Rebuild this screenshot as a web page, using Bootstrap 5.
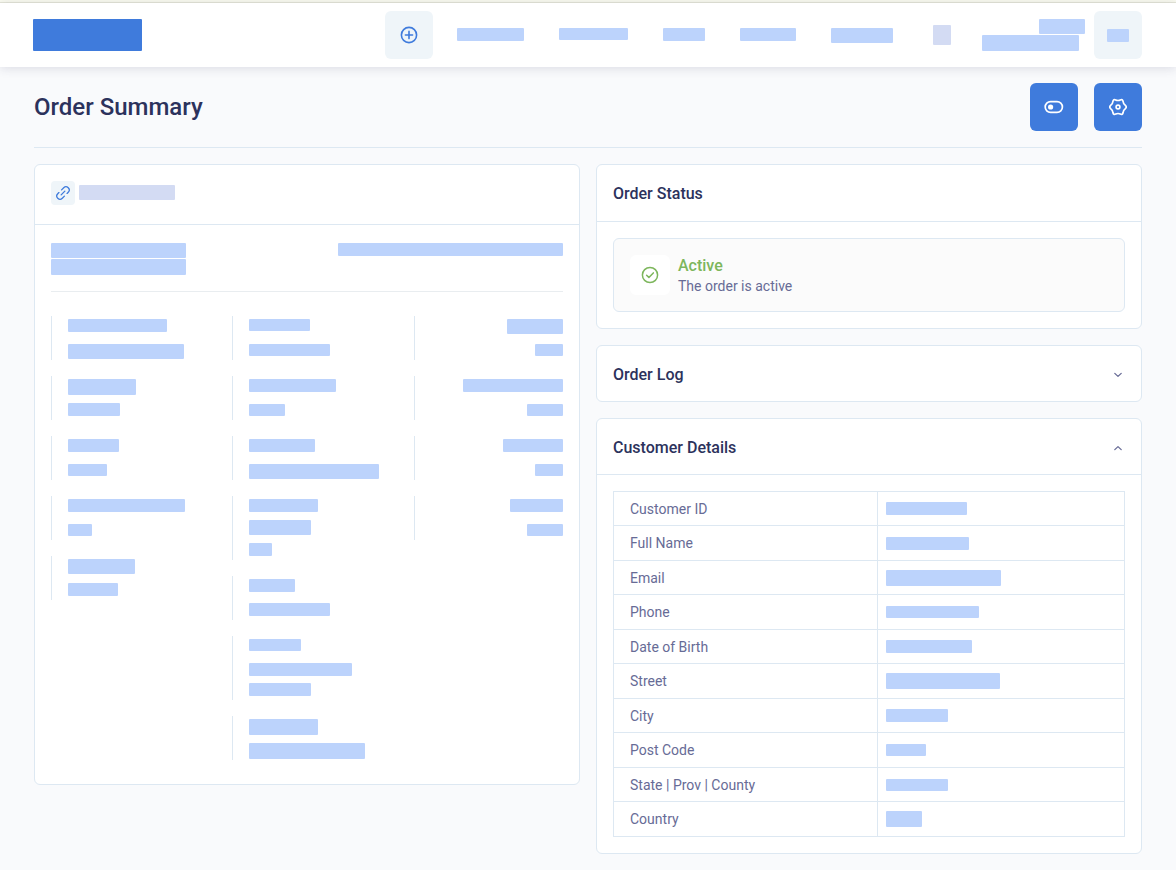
<!DOCTYPE html>
<html lang="en">
<head>
<meta charset="utf-8">
<meta name="viewport" content="width=device-width, initial-scale=1">
<title>Order Summary</title>
<link href="https://cdn.jsdelivr.net/npm/bootstrap@5.3.0/dist/css/bootstrap.min.css" rel="stylesheet">
<style>
  :root {
    --brand: #3f7bdc;
    --ink: #2c325c;
    --muted: #676b96;
    --line: #dde8f2;
    --soft: #eff5f9;
    --redact: #bcd3fc;
    --redact-alt: #d3dbf3;
    --ok: #7db65c;
  }
  body { font-family: Roboto, "Liberation Sans", sans-serif; font-size: 14px; line-height: 20px; color: var(--muted); background: #f9fafc; }
  svg { display: block; fill: none; stroke: currentColor; stroke-linecap: round; stroke-linejoin: round; }

  .notice-strip { height: 3px; background: #fafbf0; border-bottom: 1px solid #e5e6d8; }
  .topbar { height: 64px; padding: 0 34px 0 33px; background: #fff; box-shadow: 0 1px 10px rgba(50, 50, 93, .16); }
  .brand-mark { width: 109px; height: 32px; border-radius: 1px; background: var(--brand); }
  .tile { width: 48px; height: 48px; padding: 0; border: 0; border-radius: 6px; display: flex; align-items: center; justify-content: center; }
  .tile-soft, .tile-soft:hover { background: var(--soft); color: var(--brand); }
  .tile-brand, .tile-brand:hover { background: var(--brand); color: #fff; }
  .main-links { gap: 35px; margin-left: 24px; margin-right: 40px; height: 15px; }
  .main-links a { display: block; }
  .user-info { gap: 1px; margin-left: 31px; margin-right: 9px; }
  .user-info .second { margin-right: 6px; }

  /* Hidden values are drawn as plain blocks */
  .blk { display: block; height: 13px; max-width: 100%; border-radius: 1px; background: var(--redact); }
  .blk-sm { height: 12px; }
  .blk-md { height: 15px; }
  .blk-lg { height: 16px; }
  .blk-xl { height: 20px; }
  .blk-alt { background: var(--redact-alt); }

  .page { padding: 16px 34px; }
  .page-head { padding-bottom: 16px; margin-bottom: 16px; border-bottom: 1px solid var(--line); }
  .page-head h1 { font-size: 24px; line-height: 32px; font-weight: 500; color: var(--ink); }
  .panel { background: #fff; border: 1px solid var(--line); border-radius: 6px; }
  .panel-title { font-size: 16px; line-height: 24px; font-weight: 500; color: var(--ink); }
  .panel-head { height: 57px; padding: 2px 16px 0; border-bottom: 1px solid var(--line); display: flex; align-items: center; }
  .toggle-head { width: 100%; height: 55px; padding: 2px 18px 0 16px; border: 0; background: none; display: flex; align-items: center; justify-content: space-between; text-align: left; }
  .toggle-head svg { color: var(--muted); }
  .toggle-head[aria-expanded="true"] svg { transform: rotate(180deg); }

  .ref-head { height: 60px; padding: 16px; border-bottom: 1px solid var(--line); gap: 4px; }
  .ref-btn { width: 24px; height: 24px; padding: 0; border: 0; border-radius: 4px; display: flex; align-items: center; justify-content: center; }
  .ref-head .blk { margin-top: 4px; }
  .ref-body { padding: 18px 16px 24px; }
  .ref-top { padding-bottom: 16px; border-bottom: 1px solid #e9edf0; margin-bottom: 24px; }
  .ref-top .left-pair { gap: 1px; }

  .facts { display: grid; grid-template-columns: repeat(3, 1fr); column-gap: 32px; }
  .facts-col { display: flex; flex-direction: column; gap: 16px; }
  .fact { border-left: 1px solid var(--line); padding: 3px 0 0 16px; margin: 0; }
  .fact dt { height: 24px; }
  .fact dd { height: 20px; margin: 0; }
  .fact dd:last-child { height: 17px; }
  .fact dd .blk-sm, .fact dd .blk-md { position: static; margin-top: 1px; }
  .fact-tight dt { height: 20px; }
  .fact-tight dt + dd { height: 24px; }
  .facts-end dt, .facts-end dd { display: flex; justify-content: flex-end; }
  /* keep the first block's margin inside its row */
  .fact dd { display: flow-root; }
  .facts-end .fact dd { display: flex; }

  .status-box { padding: 16px; gap: 8px; background: #fbfbfb; border: 1px solid var(--line); border-radius: 6px; }
  .status-icon { width: 40px; height: 40px; border-radius: 6px; background: #fff; color: var(--ok); display: flex; align-items: center; justify-content: center; }
  .status-name { font-size: 16px; line-height: 22px; font-weight: 500; color: var(--ok); }
  .status-note { line-height: 18px; }

  .details { width: 100%; border-collapse: collapse; table-layout: fixed; }
  .details th, .details td { height: 34px; padding: 0 8px; border: 1px solid var(--line); vertical-align: middle; }
  .details tr:nth-child(even) > * { height: 35px; }
  .details th { width: 51.6%; padding-left: 16px; font-weight: 400; }
</style>
</head>
<body>
<div class="notice-strip"></div>
<header class="topbar d-flex align-items-center">
  <a href="#" class="brand-mark" aria-label="Home"></a>
  <button type="button" class="btn tile tile-soft ms-auto" aria-label="Add">
    <svg width="18" height="18" viewBox="0 0 18 18" stroke-width="1.6"><circle cx="9" cy="9" r="7.6"/><path d="M9 5.4v7.2M5.4 9h7.2"/></svg>
  </button>
  <nav class="main-links d-flex align-items-start" aria-label="Main">
    <a href="#" aria-label="Link 1"><span class="blk" style="width:67px"></span></a>
    <a href="#" aria-label="Link 2"><span class="blk blk-sm" style="width:69px"></span></a>
    <a href="#" aria-label="Link 3"><span class="blk" style="width:42px"></span></a>
    <a href="#" aria-label="Link 4"><span class="blk" style="width:56px"></span></a>
    <a href="#" aria-label="Link 5"><span class="blk blk-md" style="width:62px"></span></a>
  </nav>
  <span class="blk blk-xl blk-alt" style="width:18px"></span>
  <div class="user-info d-flex flex-column align-items-end">
    <span class="blk blk-md" style="width:46px"></span>
    <span class="blk blk-lg second" style="width:97px"></span>
  </div>
  <button type="button" class="btn tile tile-soft" aria-label="Account"><span class="blk" style="width:22px"></span></button>
</header>

<main class="page">
  <div class="page-head d-flex align-items-center gap-3">
    <h1 class="m-0 me-auto">Order Summary</h1>
    <button type="button" class="btn tile tile-brand" aria-label="Toggle view">
      <svg width="20" height="14" viewBox="0 0 20 14" stroke-width="1.7"><rect x="1.2" y="1.6" width="17.2" height="10.8" rx="5.4"/><circle cx="6.6" cy="7" r="2.6" fill="currentColor" stroke="none"/></svg>
    </button>
    <button type="button" class="btn tile tile-brand" aria-label="Settings">
      <svg width="18" height="18" viewBox="-9 -9 18 18" stroke-width="1.7"><path d="M7.3 1.7Q5.3 3 5.1 5.5Q4.6 8.3 2.3 7.1Q0 5.9-2.3 7.1Q-4.6 8.3-5.1 5.5Q-5.3 3-7.3 1.7Q-9.2 0-7.3-1.7Q-5.3-3-5.1-5.5Q-4.6-8.3-2.3-7.1Q0-5.9 2.3-7.1Q4.6-8.3 5.1-5.5Q5.3-3 7.3-1.7Q9.2 0 7.3 1.7Z"/><circle r="1.9"/></svg>
    </button>
  </div>

  <div class="row gx-3 align-items-start">
    <div class="col-6">
      <section class="panel">
        <div class="ref-head d-flex align-items-start">
          <button type="button" class="btn ref-btn tile-soft" aria-label="Copy link">
            <svg width="16" height="16" viewBox="-8 -8 16 16" stroke-width="1.3"><g transform="rotate(-45)"><path d="M1.2-3.2H4.2a3.2 3.2 0 0 1 0 6.4H2.6M-1.2 3.2H-4.2a3.2 3.2 0 0 1 0-6.4H-2.6M-2.6 0H2.6"/></g></svg>
          </button>
          <span class="blk blk-md blk-alt" style="width:96px"></span>
        </div>
        <div class="ref-body">
          <div class="ref-top d-flex justify-content-between align-items-start">
            <div class="left-pair d-flex flex-column">
              <span class="blk blk-md" style="width:135px"></span>
              <span class="blk blk-lg" style="width:135px"></span>
            </div>
            <span class="blk" style="width:225px"></span>
          </div>
          <div class="facts">
            <div class="facts-col">
              <dl class="fact"><dt><span class="blk" style="width:99px"></span></dt><dd><span class="blk blk-md" style="width:116px"></span></dd></dl>
              <dl class="fact"><dt><span class="blk blk-lg" style="width:68px"></span></dt><dd><span class="blk" style="width:52px"></span></dd></dl>
              <dl class="fact"><dt><span class="blk" style="width:51px"></span></dt><dd><span class="blk blk-sm" style="width:39px"></span></dd></dl>
              <dl class="fact"><dt><span class="blk" style="width:117px"></span></dt><dd><span class="blk blk-sm" style="width:24px"></span></dd></dl>
              <dl class="fact"><dt><span class="blk blk-md" style="width:67px"></span></dt><dd><span class="blk" style="width:50px"></span></dd></dl>
            </div>
            <div class="facts-col">
              <dl class="fact"><dt><span class="blk blk-sm" style="width:61px"></span></dt><dd><span class="blk blk-sm" style="width:81px"></span></dd></dl>
              <dl class="fact"><dt><span class="blk" style="width:87px"></span></dt><dd><span class="blk blk-sm" style="width:36px"></span></dd></dl>
              <dl class="fact"><dt><span class="blk" style="width:66px"></span></dt><dd><span class="blk blk-md" style="width:130px"></span></dd></dl>
              <dl class="fact fact-tight"><dt><span class="blk" style="width:69px"></span></dt><dd><span class="blk blk-md" style="width:62px"></span></dd><dd><span class="blk" style="width:23px"></span></dd></dl>
              <dl class="fact"><dt><span class="blk" style="width:46px"></span></dt><dd><span class="blk" style="width:81px"></span></dd></dl>
              <dl class="fact"><dt><span class="blk blk-sm" style="width:52px"></span></dt><dd><span class="blk" style="width:103px"></span></dd><dd><span class="blk" style="width:62px"></span></dd></dl>
              <dl class="fact"><dt><span class="blk blk-lg" style="width:69px"></span></dt><dd><span class="blk blk-lg" style="width:116px"></span></dd></dl>
            </div>
            <div class="facts-col facts-end">
              <dl class="fact"><dt><span class="blk blk-md" style="width:56px"></span></dt><dd><span class="blk blk-sm" style="width:28px"></span></dd></dl>
              <dl class="fact"><dt><span class="blk" style="width:100px"></span></dt><dd><span class="blk blk-sm" style="width:36px"></span></dd></dl>
              <dl class="fact"><dt><span class="blk" style="width:60px"></span></dt><dd><span class="blk blk-sm" style="width:28px"></span></dd></dl>
              <dl class="fact"><dt><span class="blk" style="width:53px"></span></dt><dd><span class="blk blk-sm" style="width:36px"></span></dd></dl>
            </div>
          </div>
        </div>
      </section>
    </div>

    <div class="col-6 d-flex flex-column gap-3">
      <section class="panel">
        <div class="panel-head"><h2 class="panel-title m-0">Order Status</h2></div>
        <div class="p-3">
          <div class="status-box d-flex align-items-center">
            <span class="status-icon">
              <svg width="18" height="18" viewBox="0 0 18 18" stroke-width="1.5"><circle cx="9" cy="9" r="7.6"/><path d="M5.6 9.2l2.3 2.2 4.4-4.5"/></svg>
            </span>
            <div>
              <div class="status-name">Active</div>
              <div class="status-note">The order is active</div>
            </div>
          </div>
        </div>
      </section>

      <section class="panel">
        <h2 class="m-0 fs-6 lh-1">
          <button type="button" class="toggle-head panel-title" data-bs-toggle="collapse" data-bs-target="#orderLog" aria-expanded="false" aria-controls="orderLog">Order Log
            <svg width="10" height="6" viewBox="0 0 10 6" stroke-width="1.3"><path d="M1.8 1.4L5 4.4l3.2-3"/></svg>
          </button>
        </h2>
        <div id="orderLog" class="collapse"></div>
      </section>

      <section class="panel">
        <h2 class="m-0 fs-6 lh-1">
          <button type="button" class="toggle-head panel-title" data-bs-toggle="collapse" data-bs-target="#customer" aria-expanded="true" aria-controls="customer">Customer Details
            <svg width="10" height="6" viewBox="0 0 10 6" stroke-width="1.3"><path d="M1.8 1.4L5 4.4l3.2-3"/></svg>
          </button>
        </h2>
        <div id="customer" class="collapse show">
          <div class="p-3 border-top" style="--bs-border-color:var(--line)">
            <table class="details">
              <tbody>
                <tr><th scope="row">Customer ID</th><td><span class="blk" style="width:81px"></span></td></tr>
                <tr><th scope="row">Full Name</th><td><span class="blk" style="width:83px"></span></td></tr>
                <tr><th scope="row">Email</th><td><span class="blk blk-lg" style="width:115px"></span></td></tr>
                <tr><th scope="row">Phone</th><td><span class="blk blk-sm" style="width:93px"></span></td></tr>
                <tr><th scope="row">Date of Birth</th><td><span class="blk" style="width:86px"></span></td></tr>
                <tr><th scope="row">Street</th><td><span class="blk blk-lg" style="width:114px"></span></td></tr>
                <tr><th scope="row">City</th><td><span class="blk" style="width:62px"></span></td></tr>
                <tr><th scope="row">Post Code</th><td><span class="blk blk-sm" style="width:40px"></span></td></tr>
                <tr><th scope="row">State | Prov | County</th><td><span class="blk blk-sm" style="width:62px"></span></td></tr>
                <tr><th scope="row">Country</th><td><span class="blk blk-lg" style="width:36px"></span></td></tr>
              </tbody>
            </table>
          </div>
        </div>
      </section>
    </div>
  </div>
</main>
<script src="https://cdn.jsdelivr.net/npm/bootstrap@5.3.0/dist/js/bootstrap.bundle.min.js"></script>
</body>
</html>
